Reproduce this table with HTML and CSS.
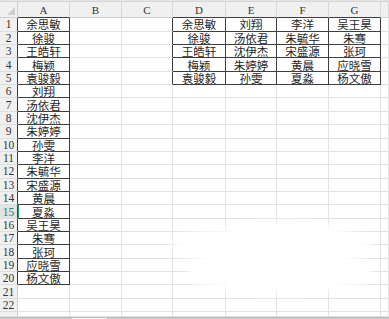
FILE: index.html
```html
<!DOCTYPE html>
<html>
<head>
<meta charset="utf-8">
<link rel="stylesheet" href="styles.css">
</head>
<body>
<div class="app">
  <div class="topstrip"></div>
  <div class="row head">
    <div class="c corner"><span class="tri"></span></div>
    <div class="c hd bb">A</div><div class="c hd">B</div><div class="c hd">C</div>
    <div class="c hd bb">D</div><div class="c hd bb">E</div><div class="c hd bb">F</div><div class="c hd bb">G</div><div class="c hd"></div>
  </div>
  <div class="row"><div class="c n br">1</div><div class="c b">余思敏</div><div class="c"></div><div class="c br"></div><div class="c b">余思敏</div><div class="c b">刘翔</div><div class="c b">李洋</div><div class="c b">吴王昊</div><div class="c"></div></div>
  <div class="row"><div class="c n br">2</div><div class="c b">徐骏</div><div class="c"></div><div class="c br"></div><div class="c b">徐骏</div><div class="c b">汤依君</div><div class="c b">朱毓华</div><div class="c b">朱骞</div><div class="c"></div></div>
  <div class="row"><div class="c n br">3</div><div class="c b">王皓轩</div><div class="c"></div><div class="c br"></div><div class="c b">王皓轩</div><div class="c b">沈伊杰</div><div class="c b">宋盛源</div><div class="c b">张珂</div><div class="c"></div></div>
  <div class="row"><div class="c n br">4</div><div class="c b">梅颖</div><div class="c"></div><div class="c br"></div><div class="c b">梅颖</div><div class="c b">朱婷婷</div><div class="c b">黄晨</div><div class="c b">应晓雪</div><div class="c"></div></div>
  <div class="row"><div class="c n br">5</div><div class="c b">袁骏毅</div><div class="c"></div><div class="c br"></div><div class="c b">袁骏毅</div><div class="c b">孙雯</div><div class="c b">夏淼</div><div class="c b">杨文傲</div><div class="c"></div></div>
  <div class="row"><div class="c n br">6</div><div class="c b">刘翔</div><div class="c"></div><div class="c"></div><div class="c"></div><div class="c"></div><div class="c"></div><div class="c"></div><div class="c"></div></div>
  <div class="row"><div class="c n br">7</div><div class="c b">汤依君</div><div class="c"></div><div class="c"></div><div class="c"></div><div class="c"></div><div class="c"></div><div class="c"></div><div class="c"></div></div>
  <div class="row"><div class="c n br">8</div><div class="c b">沈伊杰</div><div class="c"></div><div class="c"></div><div class="c"></div><div class="c"></div><div class="c"></div><div class="c"></div><div class="c"></div></div>
  <div class="row"><div class="c n br">9</div><div class="c b">朱婷婷</div><div class="c"></div><div class="c"></div><div class="c"></div><div class="c"></div><div class="c"></div><div class="c"></div><div class="c"></div></div>
  <div class="row"><div class="c n br">10</div><div class="c b">孙雯</div><div class="c"></div><div class="c"></div><div class="c"></div><div class="c"></div><div class="c"></div><div class="c"></div><div class="c"></div></div>
  <div class="row"><div class="c n br">11</div><div class="c b">李洋</div><div class="c"></div><div class="c"></div><div class="c"></div><div class="c"></div><div class="c"></div><div class="c"></div><div class="c"></div></div>
  <div class="row"><div class="c n br">12</div><div class="c b">朱毓华</div><div class="c"></div><div class="c"></div><div class="c"></div><div class="c"></div><div class="c"></div><div class="c"></div><div class="c"></div></div>
  <div class="row"><div class="c n br">13</div><div class="c b">宋盛源</div><div class="c"></div><div class="c"></div><div class="c"></div><div class="c"></div><div class="c"></div><div class="c"></div><div class="c"></div></div>
  <div class="row"><div class="c n br">14</div><div class="c b">黄晨</div><div class="c"></div><div class="c"></div><div class="c"></div><div class="c"></div><div class="c"></div><div class="c"></div><div class="c"></div></div>
  <div class="row"><div class="c n br sel-n">15</div><div class="c b sel">夏淼</div><div class="c"></div><div class="c"></div><div class="c"></div><div class="c"></div><div class="c"></div><div class="c"></div><div class="c"></div></div>
  <div class="row"><div class="c n br">16</div><div class="c b">吴王昊</div><div class="c"></div><div class="c"></div><div class="c"></div><div class="c"></div><div class="c"></div><div class="c"></div><div class="c"></div></div>
  <div class="row"><div class="c n br">17</div><div class="c b">朱骞</div><div class="c"></div><div class="c"></div><div class="c"></div><div class="c"></div><div class="c"></div><div class="c"></div><div class="c"></div></div>
  <div class="row"><div class="c n br">18</div><div class="c b">张珂</div><div class="c"></div><div class="c"></div><div class="c"></div><div class="c"></div><div class="c"></div><div class="c"></div><div class="c"></div></div>
  <div class="row"><div class="c n br">19</div><div class="c b">应晓雪</div><div class="c"></div><div class="c"></div><div class="c"></div><div class="c"></div><div class="c"></div><div class="c"></div><div class="c"></div></div>
  <div class="row"><div class="c n br">20</div><div class="c b">杨文傲</div><div class="c"></div><div class="c"></div><div class="c"></div><div class="c"></div><div class="c"></div><div class="c"></div><div class="c"></div></div>
  <div class="row"><div class="c n">21</div><div class="c"></div><div class="c"></div><div class="c"></div><div class="c"></div><div class="c"></div><div class="c"></div><div class="c"></div><div class="c"></div></div>
  <div class="row"><div class="c n">22</div><div class="c"></div><div class="c"></div><div class="c"></div><div class="c"></div><div class="c"></div><div class="c"></div><div class="c"></div><div class="c"></div></div>
  <div class="row last"><div class="c n"></div><div class="c"></div><div class="c"></div><div class="c"></div><div class="c"></div><div class="c"></div><div class="c"></div><div class="c"></div><div class="c"></div></div>
  <div class="footer"><div class="fseg"></div><div class="fgap"></div><div class="fseg2"></div></div>
  <div class="smear">
    <div class="blob b1"></div>
    <div class="blob b2"></div>
    <div class="blob b3"></div>
  </div>
</div>
</body>
</html>
```

FILE: styles.css
```css
html, body {
  margin: 0;
  padding: 0;
  background: #ffffff;
}
.app {
  position: relative;
  width: 389px;
  height: 319px;
  overflow: hidden;
  display: flex;
  flex-direction: column;
  font-family: "Noto Sans CJK SC", sans-serif;
}
.topstrip {
  height: 2px;
  flex: none;
  background: #e4e4e4;
  border-bottom: 1px solid #d6d6d6;
  box-sizing: border-box;
}
.row {
  display: grid;
  grid-template-columns: 18px 52px 52px 51px 53px 51px 52px 52px 1fr;
  height: 13.37px;
  flex: none;
}
.row.head {
  height: 16.3px;
}
.row.last {
  height: 4.6px;
}
.c {
  box-sizing: border-box;
  border-right: 1px solid #e2e2e2;
  border-bottom: 1px solid #e2e2e2;
  display: flex;
  align-items: center;
  justify-content: center;
  white-space: nowrap;
  font-size: 11.5px;
  line-height: 12px;
  color: #262626;
}
.hd {
  background: #f0f0f0;
  border-right-color: #d8d8d8;
  border-bottom-color: #cfcfcf;
  font-family: "Liberation Serif", serif;
  font-size: 11px;
  color: #333333;
  padding-top: 1px;
}
.corner {
  background: #f0f0f0;
  border-right-color: #cfcfcf;
  border-bottom-color: #cfcfcf;
  position: relative;
}
.tri {
  position: absolute;
  right: 2px;
  bottom: 2px;
  width: 0;
  height: 0;
  border-left: 8px solid transparent;
  border-bottom: 8px solid #cdcdcd;
}
.n {
  background: #f0f0f0;
  border-right-color: #cfcfcf;
  border-bottom-color: #dedede;
  font-family: "Liberation Serif", serif;
  font-size: 11.5px;
  color: #333333;
}
.b {
  border-right-color: #3e3e3e;
  border-bottom-color: #3e3e3e;
}
.br {
  border-right-color: #3e3e3e;
}
.bb {
  border-bottom-color: #3e3e3e;
}
.sel-n {
  background: #dfe5e2;
  color: #2c7a68;
}
.sel {
  box-shadow: inset 1px 0 0 #2f9a6a;
}
.footer {
  flex: 1;
  display: flex;
  background: #f4f4f4;
  border-top: 1px solid #bdbdbd;
}
.fseg {
  width: 72px;
  background: #c9c9c9;
}
.fgap {
  width: 35px;
}
.fseg2 {
  flex: 1;
  background: #c9c9c9;
}
.smear {
  position: absolute;
  left: 168px;
  top: 222px;
  width: 210px;
  height: 76px;
}
.blob {
  position: absolute;
  background: rgba(255, 255, 255, 0.93);
  filter: blur(5px);
  border-radius: 45%;
}
.b1 {
  left: 4px;
  top: 4px;
  width: 200px;
  height: 38px;
}
.b2 {
  left: 18px;
  top: 28px;
  width: 188px;
  height: 44px;
}
.b3 {
  left: 60px;
  top: 0;
  width: 120px;
  height: 30px;
}
```
